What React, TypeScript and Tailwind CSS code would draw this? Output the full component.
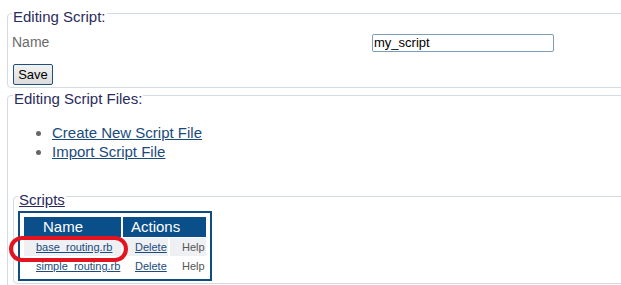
import React from 'react';

const rows = [
  { name: 'base_routing.rb', shaded: true },
  { name: 'simple_routing.rb', shaded: false },
];

const legendCls = 'px-px pt-[6px] text-[15px] leading-[17px] text-[#2b2b5c]';

export default function App() {
  return (
    <div className="relative w-[621px] h-[285px] overflow-hidden bg-white font-['Liberation_Sans',Arial,sans-serif]">
      <div className="w-[660px] pl-[7px] pt-[2px]">
        {/* Editing Script */}
        <fieldset className="border border-[#d3dbe3] rounded-[4px] px-[4px] h-[86px]">
          <legend className={legendCls}>Editing Script:</legend>
          <div className="flex items-center mt-[7px]">
            <label className="w-[360px] text-[14px] text-[#6a6a6a]">Name</label>
            <input
              defaultValue="my_script"
              className="w-[182px] h-[18px] border border-[#7f9db9] rounded-[2px] px-px text-[13px] text-black outline-none"
            />
          </div>
          <button className="mt-[11px] ml-px w-[40px] h-[21px] border border-[#1f4f7f] rounded-[2px] bg-gradient-to-b from-[#f2f2f2] to-[#dcdcdc] text-[13px] text-black leading-none">
            Save
          </button>
        </fieldset>

        {/* Editing Script Files */}
        <fieldset className="-mt-[4px] border border-[#d3dbe3] rounded-[4px] pl-[5px] h-[260px]">
          <legend className={legendCls}>Editing Script Files:</legend>
          <ul className="mt-[16px] ml-[26px] list-disc pl-[13px] text-[15px] leading-[19px] marker:text-[#666]">
            <li><a href="#" className="text-[#1b4b7b] underline">Create New Script File</a></li>
            <li><a href="#" className="text-[#1b4b7b] underline">Import Script File</a></li>
          </ul>

          <fieldset className="mt-[24px] border border-[#d3dbe3] rounded-[4px] pl-[4px] h-[99px]">
            <legend className={`${legendCls} underline`}>Scripts</legend>
            <div className="inline-block mt-[3px] border-2 border-[#0f4c82] px-[2px] py-[3px]">
              <table className="border-separate border-spacing-x-0.5 border-spacing-y-px">
                <thead>
                  <tr className="h-[20px] text-[15px] leading-[18px] text-white text-left">
                    <th className="w-[97px] bg-[#0b4f8a] pl-[19px] font-normal">Name</th>
                    <th colSpan={2} className="bg-[#0b4f8a] pl-[8px] font-normal">Actions</th>
                  </tr>
                </thead>
                <tbody className="text-[11px] leading-[14px]">
                  {rows.map((r) => (
                    <tr key={r.name} className={`h-[18px] ${r.shaded ? 'bg-[#eef0f4]' : ''}`}>
                      <td className="pl-[12px]">
                        <a href="#" className="text-[#1b4b7b] underline">{r.name}</a>
                      </td>
                      <td className="w-[45px] pl-[12px]">
                        <a href="#" className="text-[#1b4b7b] underline">Delete</a>
                      </td>
                      <td className="w-[36px] pl-[12px] text-[#555]">Help</td>
                    </tr>
                  ))}
                </tbody>
              </table>
            </div>
          </fieldset>
        </fieldset>
      </div>

      {/* highlight annotation */}
      <div className="absolute left-[9px] top-[236px] w-[119px] h-[26px] border-4 border-[#e3141f] rounded-[13px]" />
    </div>
  );
}
